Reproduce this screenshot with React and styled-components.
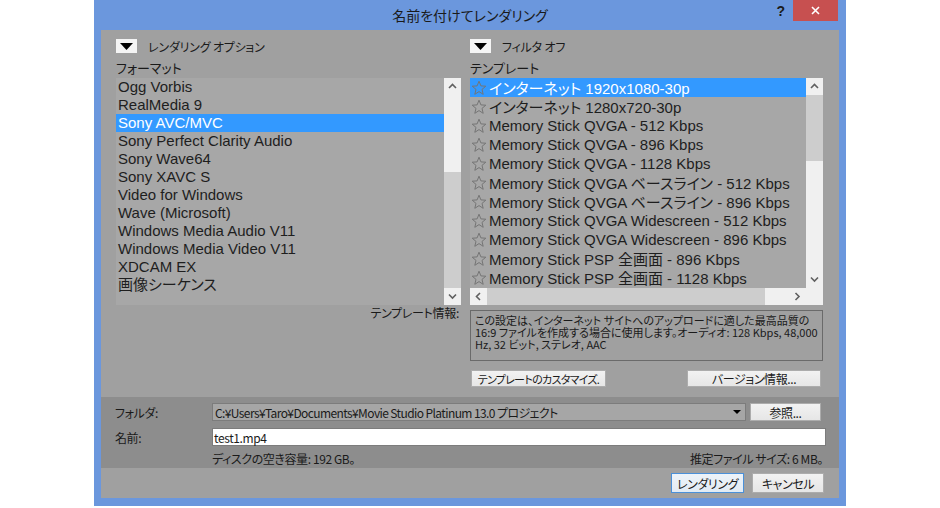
import styled, { createGlobalStyle } from "styled-components";

const GlobalStyle = createGlobalStyle`
  html, body {
    margin: 0;
    padding: 0;
    background: #ffffff;
  }
  body {
    font-family: "Noto Sans CJK JP", "Liberation Sans", sans-serif;
    font-feature-settings: "palt" 1;
    color: #1a1a1a;
  }
`;

const Page = styled.div`
  width: 940px;
  height: 508px;
  padding-left: 94px;
  box-sizing: border-box;
  overflow: hidden;
`;

const Window = styled.div`
  width: 752px;
  height: 506px;
  box-sizing: border-box;
  background: #6b97dd;
  padding: 0 7px 8px;
  display: flex;
  flex-direction: column;
`;

const TitleBar = styled.div`
  height: 30px;
  display: grid;
  grid-template-columns: 1fr auto 1fr;
  align-items: start;
`;

const Title = styled.div`
  grid-column: 2;
  font-size: 14px;
  line-height: 30px;
  color: #1a1a1a;
`;

const Controls = styled.div`
  grid-column: 3;
  justify-self: end;
  display: flex;
  align-items: flex-start;
  gap: 8px;
  margin-right: 1px;
`;

const Help = styled.span`
  font-family: "Liberation Sans", sans-serif;
  font-weight: bold;
  font-size: 14px;
  line-height: 22px;
  color: #1a1a1a;
`;

const CloseButton = styled.div`
  width: 45px;
  height: 21px;
  background: #c75050;
  display: flex;
  align-items: center;
  justify-content: center;
`;

const Client = styled.div`
  flex: 1;
  display: flex;
  flex-direction: column;
  background: #a0a0a0;
`;

const Upper = styled.div`
  padding: 9px 16px 10px 15px;
  display: grid;
  grid-template-columns: 345px 353px;
  grid-template-rows: 14px 25px 227px 56px 26px;
  column-gap: 9px;
`;

const ToggleRow = styled.div`
  display: flex;
  align-items: center;
  gap: 11px;
  font-size: 12px;
  letter-spacing: -0.2px;
`;

const ToggleBox = styled.div`
  width: 21px;
  height: 14px;
  background: #f4f4f4;
  display: flex;
  align-items: center;
  justify-content: center;
`;

const SectionLabel = styled.div`
  font-size: 13px;
  line-height: 17px;
  padding-top: 6px;
`;

const ListBox = styled.div`
  display: grid;
  grid-template-columns: 1fr 17px;
  grid-template-rows: ${(p) => (p.$hscroll ? "1fr 17px" : "1fr")};
  background: #a7a7a7;
  overflow: hidden;
`;

const Items = styled.div`
  overflow: hidden;
`;

const FormatItem = styled.div`
  height: 18px;
  line-height: 18px;
  padding-left: 2px;
  font-family: "Liberation Sans", "Noto Sans CJK JP", sans-serif;
  font-size: 15px;
  white-space: nowrap;
  color: ${(p) => (p.$selected ? "#ffffff" : "#1e1e1e")};
  background: ${(p) => (p.$selected ? "#3399ff" : "transparent")};
`;

const TemplateItem = styled.div`
  height: 19px;
  display: flex;
  align-items: center;
  gap: 2px;
  padding-left: 1px;
  font-family: "Liberation Sans", "Noto Sans CJK JP", sans-serif;
  font-size: 15px;
  white-space: nowrap;
  color: ${(p) => (p.$selected ? "#ffffff" : "#1e1e1e")};
  background: ${(p) => (p.$selected ? "#3399ff" : "transparent")};
`;

const VScroll = styled.div`
  background: #f0f0f0;
  display: flex;
  flex-direction: column;
`;

const HScroll = styled.div`
  background: #f0f0f0;
  display: flex;
`;

const Arrow = styled.div`
  flex: 0 0 17px;
  height: 17px;
  display: flex;
  align-items: center;
  justify-content: center;
`;

const Track = styled.div`
  flex: 1;
  display: flex;
  flex-direction: ${(p) => (p.$horizontal ? "row" : "column")};
`;

const Thumb = styled.div`
  background: #cdcdcd;
  flex: none;
`;

const Corner = styled.div`
  background: #f0f0f0;
`;

const InfoLabel = styled.div`
  font-size: 12px;
  line-height: 14px;
  letter-spacing: -0.3px;
  text-align: right;
  padding-right: 2px;
  margin-top: 1px;
`;

const InfoBox = styled.div`
  margin-top: 5px;
  height: 51px;
  box-sizing: border-box;
  border: 1px solid #6a6a6a;
  padding: 3px 4px;
  font-size: 11px;
  line-height: 12px;
  white-space: nowrap;
  overflow: hidden;
`;

const ButtonRow = styled.div`
  margin-top: 9px;
  display: flex;
  justify-content: space-between;
  padding: 0 2px 0 1px;
`;

const Button = styled.div`
  flex: none;
  width: ${(p) => p.$w}px;
  height: ${(p) => p.$h || 17}px;
  box-sizing: border-box;
  border: 1px solid ${(p) => (p.$default ? "#4a90d9" : "#acacac")};
  background: ${(p) =>
    p.$default
      ? "linear-gradient(#edf3f9, #e2ebf4)"
      : "linear-gradient(#f2f2f2, #e6e6e6)"};
  font-size: ${(p) => (p.$compact ? 11 : 12)}px;
  letter-spacing: ${(p) => (p.$compact ? -0.7 : -0.4)}px;
  display: flex;
  align-items: center;
  justify-content: center;
  white-space: nowrap;
`;

const Lower = styled.div`
  height: 71px;
  box-sizing: border-box;
  background: #8d8d8d;
  padding: 6px 13px 0 14px;
  display: grid;
  grid-template-columns: 97px 1fr;
  grid-template-rows: 18px 18px 17px;
  row-gap: 7px;
  align-items: center;
  font-size: 12px;
  letter-spacing: -0.4px;
`;

const FieldLabel = styled.div`
  font-size: 12px;
`;

const FolderRow = styled.div`
  display: flex;
  gap: 4px;
  align-items: center;
`;

const Combo = styled.div`
  width: 534px;
  height: 18px;
  box-sizing: border-box;
  background: #a6a6a6;
  border: 1px solid #7c7c7c;
  display: flex;
  align-items: center;
  justify-content: space-between;
  padding: 0 4px 0 2px;
  white-space: nowrap;
  letter-spacing: -0.6px;
`;

const TextInput = styled.div`
  height: 18px;
  box-sizing: border-box;
  background: #ffffff;
  border: 1px solid #7c7c7c;
  display: flex;
  align-items: center;
  padding-left: 1px;
`;

const StatusRow = styled.div`
  margin-top: -6px;
  display: flex;
  justify-content: space-between;
  padding-right: 3px;
`;

const Footer = styled.div`
  height: 30px;
  box-sizing: border-box;
  padding: 5px 15px 0 0;
  display: flex;
  justify-content: flex-end;
  gap: 8px;
`;

const formats = [
  "Ogg Vorbis",
  "RealMedia 9",
  "Sony AVC/MVC",
  "Sony Perfect Clarity Audio",
  "Sony Wave64",
  "Sony XAVC S",
  "Video for Windows",
  "Wave (Microsoft)",
  "Windows Media Audio V11",
  "Windows Media Video V11",
  "XDCAM EX",
  "画像シーケンス",
];

const templates = [
  "インターネット  1920x1080-30p",
  "インターネット  1280x720-30p",
  "Memory Stick QVGA - 512 Kbps",
  "Memory Stick QVGA - 896 Kbps",
  "Memory Stick QVGA - 1128 Kbps",
  "Memory Stick QVGA ベースライン - 512 Kbps",
  "Memory Stick QVGA ベースライン - 896 Kbps",
  "Memory Stick QVGA Widescreen - 512 Kbps",
  "Memory Stick QVGA Widescreen - 896 Kbps",
  "Memory Stick PSP 全画面 - 896 Kbps",
  "Memory Stick PSP 全画面 - 1128 Kbps",
];

const DownTriangle = ({ w = 13, h = 7 }) => (
  <svg width={w} height={h} viewBox={`0 0 ${w} ${h}`}>
    <polygon points={`0,0 ${w},0 ${w / 2},${h}`} fill="#000" />
  </svg>
);

const Chevron = ({ dir }) => {
  const pts = {
    up: "1,5 4.5,1.5 8,5",
    down: "1,1.5 4.5,5 8,1.5",
    left: "5,1 1.5,4.5 5,8",
    right: "1.5,1 5,4.5 1.5,8",
  }[dir];
  const vert = dir === "up" || dir === "down";
  return (
    <svg width={vert ? 9 : 7} height={vert ? 7 : 9}>
      <polyline points={pts} fill="none" stroke="#606060" strokeWidth="1.6" />
    </svg>
  );
};

const Star = () => (
  <svg width="16" height="16" viewBox="0 0 16 16">
    <polygon
      points="8,1.2 9.9,5.9 14.8,6.2 11,9.4 12.2,14.3 8,11.6 3.8,14.3 5,9.4 1.2,6.2 6.1,5.9"
      fill="none"
      stroke="#757575"
      strokeWidth="1"
      strokeLinejoin="round"
    />
  </svg>
);

const VerticalScrollbar = ({ offset, size }) => (
  <VScroll>
    <Arrow>
      <Chevron dir="up" />
    </Arrow>
    <Track>
      <div style={{ height: offset }} />
      <Thumb style={{ height: size }} />
    </Track>
    <Arrow>
      <Chevron dir="down" />
    </Arrow>
  </VScroll>
);

export default function App() {
  return (
    <Page>
      <GlobalStyle />
      <Window>
        <TitleBar>
          <Title>名前を付けてレンダリング</Title>
          <Controls>
            <Help>?</Help>
            <CloseButton>
              <svg width="9" height="9">
                <path d="M1 1 L8 8 M8 1 L1 8" stroke="#fff" strokeWidth="1.6" />
              </svg>
            </CloseButton>
          </Controls>
        </TitleBar>
        <Client>
          <Upper>
            <ToggleRow>
              <ToggleBox>
                <DownTriangle />
              </ToggleBox>
              レンダリング オプション
            </ToggleRow>
            <ToggleRow>
              <ToggleBox>
                <DownTriangle />
              </ToggleBox>
              フィルタ オフ
            </ToggleRow>

            <SectionLabel>フォーマット</SectionLabel>
            <SectionLabel>テンプレート</SectionLabel>

            <ListBox>
              <Items>
                {formats.map((f, i) => (
                  <FormatItem key={f} $selected={i === 2}>
                    {f}
                  </FormatItem>
                ))}
              </Items>
              <VerticalScrollbar offset={77} size={116} />
            </ListBox>
            <ListBox $hscroll>
              <Items>
                {templates.map((t, i) => (
                  <TemplateItem key={t} $selected={i === 0}>
                    <Star />
                    <span>{t}</span>
                  </TemplateItem>
                ))}
              </Items>
              <VerticalScrollbar offset={0} size={66} />
              <HScroll>
                <Arrow>
                  <Chevron dir="left" />
                </Arrow>
                <Track $horizontal>
                  <Thumb style={{ width: 278 }} />
                </Track>
                <Arrow>
                  <Chevron dir="right" />
                </Arrow>
              </HScroll>
              <Corner />
            </ListBox>

            <InfoLabel>テンプレート情報:</InfoLabel>
            <InfoBox>
              この設定は、インターネット サイトへのアップロードに適した最高品質の
              <br />
              16:9 ファイルを作成する場合に使用します。オーディオ: 128 Kbps, 48,000
              <br />
              Hz, 32 ビット, ステレオ, AAC
            </InfoBox>

            <div />
            <ButtonRow>
              <Button $w={135} $compact>
                テンプレートのカスタマイズ.
              </Button>
              <Button $w={134}>バージョン情報...</Button>
            </ButtonRow>
          </Upper>

          <Lower>
            <FieldLabel>フォルダ:</FieldLabel>
            <FolderRow>
              <Combo>
                <span>C:¥Users¥Taro¥Documents¥Movie Studio Platinum 13.0 プロジェクト</span>
                <DownTriangle w={8} h={4} />
              </Combo>
              <Button $w={71} $h={18}>参照...</Button>
            </FolderRow>

            <FieldLabel>名前:</FieldLabel>
            <TextInput>test1.mp4</TextInput>

            <div />
            <StatusRow>
              <span>ディスクの空き容量: 192 GB。</span>
              <span>推定ファイル サイズ: 6 MB。</span>
            </StatusRow>
          </Lower>

          <Footer>
            <Button $w={73} $h={20} $default>
              レンダリング
            </Button>
            <Button $w={72} $h={20}>
              キャンセル
            </Button>
          </Footer>
        </Client>
      </Window>
    </Page>
  );
}
